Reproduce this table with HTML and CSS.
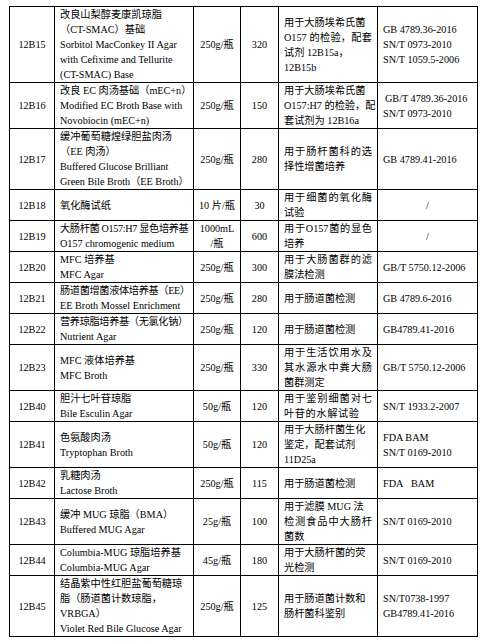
FILE: index.html
```html
<!DOCTYPE html>
<html lang="zh-CN">
<head>
<meta charset="utf-8">
<title>培养基目录</title>
<link rel="stylesheet" href="styles.css">
</head>
<body>
<div class="sheet">
<table class="catalog">
<colgroup>
<col class="c-code"><col class="c-name"><col class="c-spec"><col class="c-price"><col class="c-use"><col class="c-std">
</colgroup>
<tbody>
<tr>
<td class="code">12B15</td>
<td class="name"><div>改良山梨醇麦康凯琼脂</div><div>（CT-SMAC）基础</div><div>Sorbitol MacConkey II Agar</div><div>with Cefixime and Tellurite</div><div>(CT-SMAC) Base</div></td>
<td class="spec">250g/瓶</td>
<td class="price">320</td>
<td class="use"><div>用于大肠埃希氏菌</div><div class="jl">O157 的检验，配套</div><div>试剂 12B15a，</div><div>12B15b</div></td>
<td class="std"><div>GB 4789.36-2016</div><div>SN/T 0973-2010</div><div>SN/T 1059.5-2006</div></td>
</tr>
<tr>
<td class="code">12B16</td>
<td class="name"><div>改良 EC 肉汤基础（mEC+n）</div><div>Modified EC Broth Base with</div><div>Novobiocin (mEC+n)</div></td>
<td class="spec">250g/瓶</td>
<td class="price">150</td>
<td class="use"><div>用于大肠埃希氏菌</div><div class="jl">O157:H7 的检验，配</div><div>套试剂为 12B16a</div></td>
<td class="std"><div class="ind">GB/T 4789.36-2016</div><div>SN/T 0973-2010</div></td>
</tr>
<tr>
<td class="code">12B17</td>
<td class="name"><div>缓冲葡萄糖煌绿胆盐肉汤</div><div>（EE 肉汤）</div><div>Buffered Glucose Brilliant</div><div>Green Bile Broth（EE Broth）</div></td>
<td class="spec">250g/瓶</td>
<td class="price">280</td>
<td class="use"><div class="jl">用于肠杆菌科的选</div><div>择性增菌培养</div></td>
<td class="std">GB 4789.41-2016</td>
</tr>
<tr>
<td class="code">12B18</td>
<td class="name">氧化酶试纸</td>
<td class="spec">10 片/瓶</td>
<td class="price">30</td>
<td class="use"><div class="jl">用于细菌的氧化酶</div><div>试验</div></td>
<td class="std none">/</td>
</tr>
<tr>
<td class="code">12B19</td>
<td class="name"><div class="tight">大肠杆菌 O157:H7 显色培养基</div><div>O157 chromogenic medium</div></td>
<td class="spec"><div>1000mL</div><div>/瓶</div></td>
<td class="price">600</td>
<td class="use"><div class="jl">用于O157菌的显色</div><div>培养</div></td>
<td class="std none">/</td>
</tr>
<tr>
<td class="code">12B20</td>
<td class="name"><div>MFC 培养基</div><div>MFC Agar</div></td>
<td class="spec">250g/瓶</td>
<td class="price">300</td>
<td class="use"><div class="jl">用于大肠菌群的滤</div><div>膜法检测</div></td>
<td class="std">GB/T 5750.12-2006</td>
</tr>
<tr>
<td class="code">12B21</td>
<td class="name"><div class="tight">肠道菌增菌液体培养基（EE）</div><div>EE Broth Mossel Enrichment</div></td>
<td class="spec">250g/瓶</td>
<td class="price">280</td>
<td class="use">用于肠道菌检测</td>
<td class="std">GB 4789.6-2016</td>
</tr>
<tr>
<td class="code">12B22</td>
<td class="name"><div class="tight">营养琼脂培养基（无氯化钠）</div><div>Nutrient Agar</div></td>
<td class="spec">250g/瓶</td>
<td class="price">120</td>
<td class="use">用于肠道菌检测</td>
<td class="std">GB4789.41-2016</td>
</tr>
<tr>
<td class="code">12B23</td>
<td class="name"><div>MFC 液体培养基</div><div>MFC Broth</div></td>
<td class="spec">250g/瓶</td>
<td class="price">330</td>
<td class="use"><div class="jl">用于生活饮用水及</div><div class="jl">其水源水中粪大肠</div><div>菌群测定</div></td>
<td class="std">GB/T 5750.12-2006</td>
</tr>
<tr>
<td class="code">12B40</td>
<td class="name"><div>胆汁七叶苷琼脂</div><div>Bile Esculin Agar</div></td>
<td class="spec">50g/瓶</td>
<td class="price">120</td>
<td class="use"><div class="jl">用于鉴别细菌对七</div><div class="spread">叶苷的水解试验</div></td>
<td class="std">SN/T 1933.2-2007</td>
</tr>
<tr>
<td class="code">12B41</td>
<td class="name"><div>色氨酸肉汤</div><div>Tryptophan Broth</div></td>
<td class="spec">50g/瓶</td>
<td class="price">120</td>
<td class="use"><div>用于大肠杆菌生化</div><div>鉴定，配套试剂</div><div>11D25a</div></td>
<td class="std"><div>FDA BAM</div><div>SN/T 0169-2010</div></td>
</tr>
<tr>
<td class="code">12B42</td>
<td class="name"><div>乳糖肉汤</div><div>Lactose Broth</div></td>
<td class="spec">250g/瓶</td>
<td class="price">115</td>
<td class="use">用于肠道菌检测</td>
<td class="std">FDA&nbsp;&nbsp;&nbsp;BAM</td>
</tr>
<tr>
<td class="code">12B43</td>
<td class="name"><div>缓冲 MUG 琼脂（BMA）</div><div>Buffered MUG Agar</div></td>
<td class="spec">25g/瓶</td>
<td class="price">100</td>
<td class="use"><div>用于滤膜 MUG 法</div><div class="jl">检测食品中大肠杆</div><div>菌数</div></td>
<td class="std">SN/T 0169-2010</td>
</tr>
<tr>
<td class="code">12B44</td>
<td class="name"><div>Columbia-MUG 琼脂培养基</div><div>Columbia-MUG Agar</div></td>
<td class="spec">45g/瓶</td>
<td class="price">180</td>
<td class="use"><div>用于大肠杆菌的荧</div><div>光检测</div></td>
<td class="std">SN/T 0169-2010</td>
</tr>
<tr>
<td class="code">12B45</td>
<td class="name"><div>结晶紫中性红胆盐葡萄糖琼</div><div>脂（肠道菌计数琼脂，</div><div>VRBGA）</div><div>Violet Red Bile Glucose Agar</div></td>
<td class="spec">250g/瓶</td>
<td class="price">125</td>
<td class="use"><div>用于肠道菌计数和</div><div>肠杆菌科鉴别</div></td>
<td class="std"><div>SN/T0738-1997</div><div>GB4789.41-2016</div></td>
</tr>
</tbody>
</table>
</div>
</body>
</html>
```
FILE: styles.css
```css
html, body {
  margin: 0;
  padding: 0;
  background: #fff;
}

.sheet {
  padding: 6px 3px 0 9px;
}

.catalog {
  border-collapse: collapse;
  table-layout: fixed;
  width: 469px;
  font-family: "Liberation Serif", "Noto Sans CJK SC", serif;
  font-size: 10.2px;
  line-height: 15px;
  color: #000;
}

.c-code { width: 45px; }
.c-name { width: 139px; }
.c-spec { width: 47px; }
.c-price { width: 38px; }
.c-use { width: 99px; }
.c-std { width: 100px; }

.catalog td {
  border: 1px solid #000;
  padding: 0 5px;
  vertical-align: middle;
  white-space: nowrap;
  overflow: visible;
}

.catalog td.code,
.catalog td.spec,
.catalog td.price,
.catalog td.none {
  text-align: center;
  padding: 0 2px;
}

.catalog td.name {
  padding: 0 4px 0 5px;
}

.catalog td.use {
  padding: 0 5px;
}

.jl {
  text-align: justify;
  text-align-last: justify;
}

.spread {
  letter-spacing: 0.6px;
}

.tight {
  letter-spacing: -0.35px;
}

.ind {
  padding-left: 2px;
}
```
